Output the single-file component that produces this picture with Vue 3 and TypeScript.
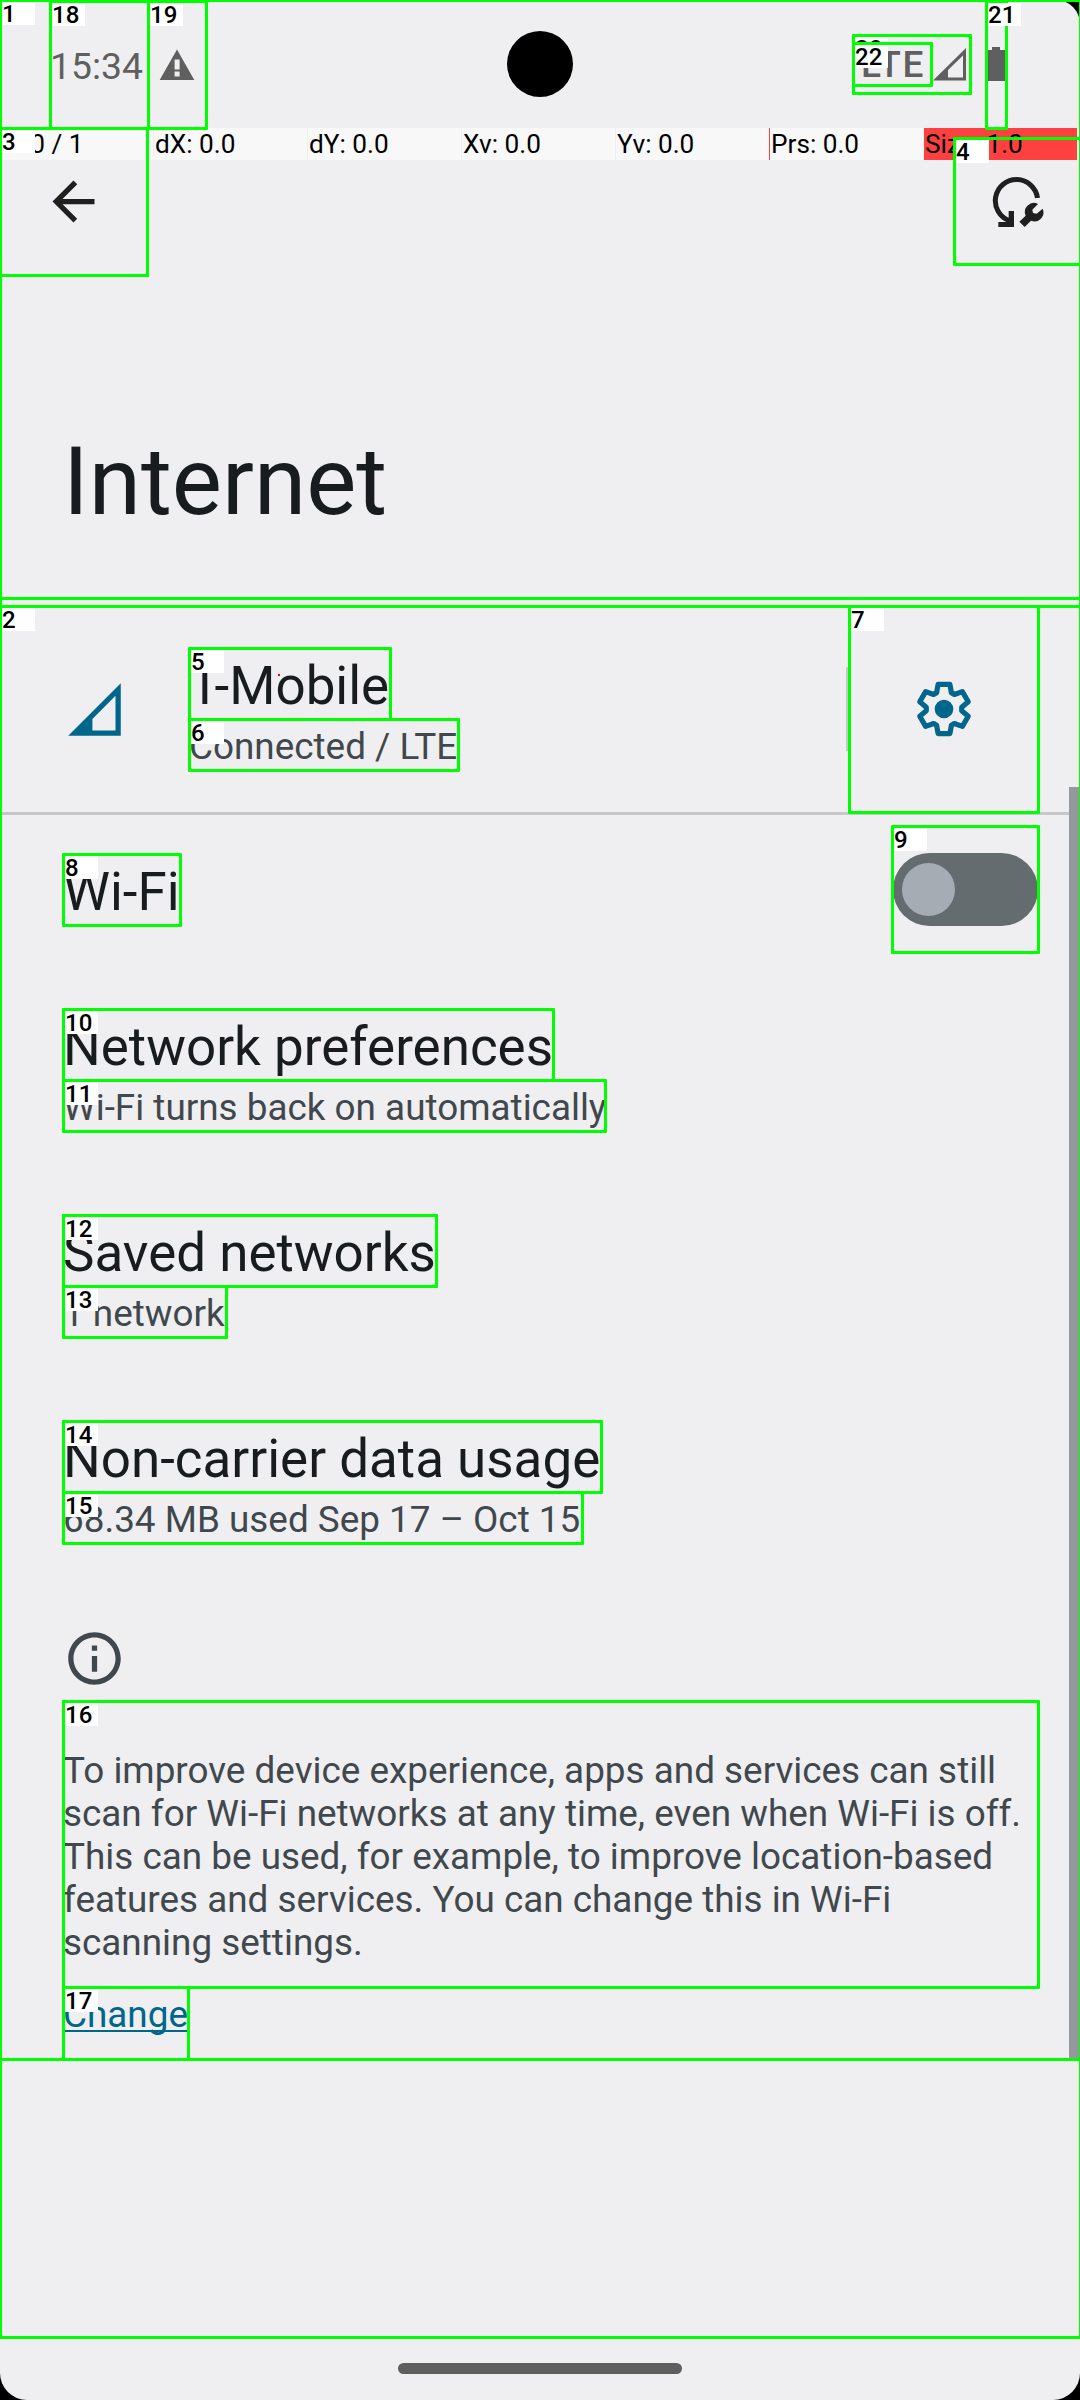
<script setup lang="ts">
interface Entry { title: string; summary: string }
interface Mark { x: number; y: number; x2: number; y2: number; label?: string }

const pointerCells: string[] = ['P: 0 / 1', 'dX: 0.0', 'dY: 0.0', 'Xv: 0.0', 'Yv: 0.0', 'Prs: 0.0', 'Size: 1.0']

const entries: Entry[] = [
  { title: 'Network preferences', summary: 'Wi-Fi turns back on automatically' },
  { title: 'Saved networks', summary: '1 network' },
  { title: 'Non-carrier data usage', summary: '68.34 MB used Sep 17 – Oct 15' },
]

const paragraph: string[] = [
  'To improve device experience, apps and services can still',
  'scan for Wi-Fi networks at any time, even when Wi-Fi is off.',
  'This can be used, for example, to improve location-based',
  'features and services. You can change this in Wi-Fi',
  'scanning settings.',
]

// Six identical teeth, each the first one turned by 60 degrees.
const tooth = [[-7.4, -16.2], [-5.9, -24.6], [5.9, -24.6], [7.4, -16.2]]
const gearPoints = Array.from({ length: 6 }, (_, i) => {
  const a = (i * Math.PI) / 3
  return tooth
    .map(([x, y]) => `${(x * Math.cos(a) - y * Math.sin(a)).toFixed(2)},${(x * Math.sin(a) + y * Math.cos(a)).toFixed(2)}`)
    .join(' ')
}).join(' ')

const m = (x: number, y: number, x2: number, y2: number, label?: string): Mark => ({ x, y, x2, y2, label })
const marks: Mark[] = [
  m(0, 0, 1080, 2337),
  m(0, 0, 1080, 598, '1'),
  m(0, 606, 1080, 2059, '2'),
  m(0, 128, 147, 275, '3'),
  m(954, 138, 1080, 264, '4'),
  m(189, 648, 390, 719, '5'),
  m(189, 719, 458, 770, '6'),
  m(849, 606, 1038, 812, '7'),
  m(63, 854, 180, 925, '8'),
  m(892, 826, 1038, 952, '9'),
  m(63, 1009, 553, 1080, '10'),
  m(63, 1080, 605, 1131, '11'),
  m(63, 1215, 436, 1286, '12'),
  m(63, 1286, 226, 1337, '13'),
  m(63, 1421, 601, 1492, '14'),
  m(63, 1492, 582, 1543, '15'),
  m(63, 1701, 1038, 1987, '16'),
  m(63, 1987, 188, 2059, '17'),
  m(50, 1, 148, 128, '18'),
  m(148, 1, 206, 128, '19'),
  m(853, 35, 970, 93, '20'),
  m(986, 1, 1006, 128, '21'),
  m(853, 43, 931, 85, '22'),
]
const boxStyle = (b: Mark) => ({
  left: `${b.x - 1}px`,
  top: `${b.y - 1}px`,
  width: `${b.x2 - b.x + 3}px`,
  height: `${b.y2 - b.y + 3}px`,
})
const labelStyle = (b: Mark) => ({ left: `${b.x + 2}px`, top: `${b.y + 2}px` })
</script>

<template>
  <div class="device">
    <div class="screen">
      <header class="status">
        <span class="clock">15:34</span>
        <svg class="warn" width="36" height="32" viewBox="0 0 36 32">
          <path d="M18 .5 35.3 31H.7zM15.6 10.5v10h5v-10zM15.6 22.5v5h5v-5z" fill="#5f5f5f" fill-rule="evenodd" />
        </svg>
        <span class="spacer"></span>
        <span class="lte">LTE</span>
        <svg class="sig" width="34" height="33" viewBox="0 0 34 33">
          <path d="M0 32.5 33 0v32.500zM15 29.500H30V7.500L15 22z" fill="#5f5f5f" fill-rule="evenodd" />
        </svg>
        <svg class="bat" width="18" height="34" viewBox="0 0 18 34">
          <path d="M5 0h8v3h5v31H0V3h5z" fill="#5f5f5f" />
        </svg>
      </header>

      <div class="pointer">
        <span v-for="(c, i) in pointerCells" :key="c" :class="['cell', { before: i === 4, hot: i === 6 }]">{{ c }}</span>
      </div>

      <div class="toolbar">
        <svg width="63" height="63" viewBox="0 0 24 24">
          <path d="M20 11H7.830l5.590-5.590L12 4l-8 8 8 8 1.410-1.410L7.830 13H20z" fill="#1f1f1f" />
        </svg>
        <svg class="reset" width="56" height="56" viewBox="90 102 168 168">
          <path d="M232.500 174A63.500 63.500 0 1 0 148 242" fill="none" stroke="#1f1f1f" stroke-width="15" />
          <path d="M146 213h16v48h-47v-15h31z" fill="#1f1f1f" />
          <path d="M234 192 217 209 219 219 230 221 248 206A27 27 0 0 1 213 242L194 261 178 245 197 227A27 27 0 0 1 234 192Z" fill="#1f1f1f" />
        </svg>
      </div>
      <h1>Internet</h1>

      <main>
        <section class="carrier">
          <svg class="cell-icon" width="63" height="63" viewBox="0 0 24 24">
            <path d="M2 22 22 2v20zM11.200 20H20V6.800L11.200 15.600z" fill="#00668b" fill-rule="evenodd" />
          </svg>
          <div class="texts">
            <div class="title">T-Mobile</div>
            <div class="summary">Connected / LTE</div>
          </div>
          <div class="vline"></div>
          <div class="gear">
            <svg width="60" height="60" viewBox="-30 -30 60 60">
              <polygon :points="gearPoints" fill="none" stroke="#00668b" stroke-width="5.200" stroke-linejoin="round" />
              <circle r="9.300" fill="#00668b" />
            </svg>
          </div>
        </section>
        <section class="wifi">
          <div class="title">Wi-Fi</div>
          <div class="switch"><div class="thumb"></div></div>
        </section>
        <section v-for="e in entries" :key="e.title" class="entry">
          <div class="title">{{ e.title }}</div>
          <div class="summary">{{ e.summary }}</div>
        </section>
        <section class="info">
          <svg width="63" height="63" viewBox="0 0 24 24">
            <path d="M11 7h2v2h-2zm0 4h2v6h-2zm1-9C6.480 2 2 6.480 2 12s4.480 10 10 10 10-4.480 10-10S17.520 2 12 2zm0 18c-4.410 0-8-3.590-8-8s3.590-8 8-8 8 3.590 8 8-3.590 8-8 8z" fill="#41484d" />
          </svg>
          <div class="para"><div v-for="l in paragraph" :key="l">{{ l }}</div></div>
          <a>Change</a>
        </section>
        <div class="scrollbar"></div>
      </main>
      <footer><div class="pill"></div></footer>
    </div>

    <div class="camera"></div>
    <div class="touch"></div>
    <template v-for="(b, i) in marks" :key="i">
      <div class="box" :style="boxStyle(b)"></div>
      <div v-if="b.label" class="label" :style="labelStyle(b)">{{ b.label }}</div>
    </template>
  </div>
</template>

<style>
body { margin: 0; }
</style>

<style scoped>
.device {
  position: relative;
  width: 1080px;
  height: 2400px;
  overflow: hidden;
  background: #000;
  font-family: Roboto, "Noto Sans", sans-serif;
}
.device * { box-sizing: border-box; }
.screen {
  display: flex;
  flex-direction: column;
  height: 2400px;
  border-radius: 24px 24px 27px 27px;
  background: #efeff1;
  overflow: hidden;
  color: #191c1e;
  white-space: nowrap;
}
svg { display: block; flex: none; }
.status {
  display: flex;
  align-items: flex-start;
  height: 128px;
  flex: none;
  padding: 0 75px 0 50px;
  color: #5f5f5f;
}
.clock { width: 109px; padding-top: 44px; font-size: 37.3px; line-height: 44px; }
.warn { margin-top: 49px; }
.spacer { flex: 1; }
.lte { width: 72px; padding-top: 43px; font-size: 37px; line-height: 44px; font-weight: 500; letter-spacing: 1.7px; }
.sig { margin-top: 48px; }
.bat { margin: 47px 0 0 20px; }
.pointer { display: flex; gap: 1px; height: 32px; flex: none; width: 1077px; }
.cell {
  flex: 1;
  padding-left: 1px;
  background: #f8f8f8;
  color: #000;
  font-size: 26.2px;
  line-height: 32px;
}
.cell.before { box-shadow: 1px 0 #ff4040; }
.cell.hot { background: #ff4040; }
.toolbar {
  display: flex;
  justify-content: space-between;
  height: 251px;
  flex: none;
  padding: 10px 34px 0 42px;
}
.reset { margin-top: 4px; }
h1 {
  margin: 0;
  padding-left: 63px;
  height: 195px;
  flex: none;
  font-size: 94.5px;
  line-height: 142px;
  font-weight: 400;
}
main { position: relative; height: 1731px; flex: none; }
.title { height: 71px; font-size: 52.95px; line-height: 76px; }
.summary { height: 51px; font-size: 36.87px; line-height: 55px; color: #41484d; }
.carrier { display: flex; align-items: center; height: 209px; border-bottom: 3px solid #c6c7c9; padding-left: 63px; }
.texts { flex: 1; padding-left: 63px; }
.vline { width: 3px; height: 84px; background: #c7c7c9; }
.gear { display: flex; justify-content: center; width: 189px; margin-right: 42px; }
.wifi { display: flex; justify-content: space-between; height: 152px; padding: 39px 42px 0 63px; }
.switch { width: 145px; height: 73px; margin-top: -1px; border-radius: 37px; background: #646c6f; padding: 10px 9px; }
.thumb { width: 53px; height: 53px; border-radius: 50%; background: #a5acb3; }
.entry { height: 206px; padding: 42px 0 0 63px; }
.info { padding: 42px 0 0 63px; color: #41484d; font-size: 36.87px; line-height: 43px; }
.para { padding-top: 59px; height: 297px; }
a { display: block; line-height: 55px; color: #00668b; text-decoration: underline; text-decoration-thickness: 2px; text-underline-offset: 3px; text-decoration-skip-ink: none; }
.scrollbar { position: absolute; right: 0; top: 181px; width: 11px; height: 1272px; background: #95989d; }
footer { display: flex; justify-content: center; padding-top: 26px; }
.pill { width: 284px; height: 11px; border-radius: 6px; background: #5f5f5f; }
.camera { position: absolute; left: 507px; top: 31px; width: 66px; height: 66px; border-radius: 50%; background: #000; }
.touch { position: absolute; left: 278px; top: 674px; width: 2px; height: 2px; background: #f00; }
.box { position: absolute; box-sizing: border-box; border: 3px solid #0f0; border-radius: 1px; }
.label {
  position: absolute;
  width: 33px;
  height: 23px;
  background: #fff;
  color: #000;
  font-size: 24px;
  line-height: 25px;
  font-weight: 500;
  white-space: nowrap;
}
</style>
